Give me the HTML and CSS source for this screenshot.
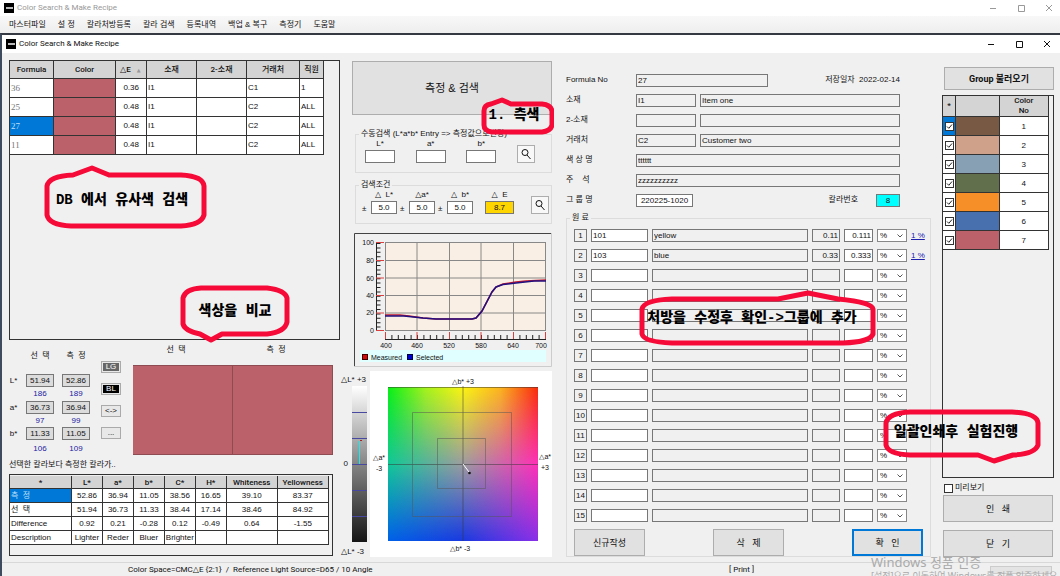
FILE: index.html
```html
<!DOCTYPE html>
<html lang="ko">
<head>
<meta charset="utf-8">
<title>Color Search &amp; Make Recipe</title>
<link rel="stylesheet" href="styles.css">
</head>
<body>
<header class="titlebar titlebar-outer">
  <span class="app-icon"></span><span class="title">Color Search &amp; Make Recipe</span>
  <svg class="win-controls" viewBox="0 0 66 10"><path d="M1 5.500h6M29.500 2.500h6v6h-6zM57 2l6 6M63 2l-6 6"/></svg>
</header>
<nav class="menubar">
  <a href="#">마스터파일</a><a href="#">설 정</a><a href="#">칼라처방등록</a><a href="#">칼라 검색</a><a href="#">등록내역</a><a href="#">백업 &amp; 복구</a><a href="#">측정기</a><a href="#">도움말</a>
</nav>
<div class="window">
  <header class="titlebar">
    <span class="app-icon"></span><span class="title">Color Search &amp; Make Recipe</span>
    <svg class="win-controls" viewBox="0 0 66 10"><path d="M1 5.500h6M29.500 2.500h6v6h-6zM57 2l6 6M63 2l-6 6"/></svg>
  </header>
  <main class="workspace">
    <section class="results">
      <div class="grid-panel search-panel">
        <table class="grid search-grid">
          <colgroup><col class="w-formula"><col class="w-color"><col class="w-de"><col class="w-mat"><col class="w-mat"><col class="w-cust"><col class="w-staff"></colgroup>
          <thead><tr><th>Formula</th><th>Color</th><th class="left">△E <span class="sort">▲</span></th><th>소재</th><th>2-소재</th><th>거래처</th><th>직원</th></tr></thead>
          <tbody>
            <tr><td class="id">36</td><td class="rose"></td><td class="num">0.36</td><td>I1</td><td></td><td>C1</td><td>1</td></tr>
            <tr><td class="id">25</td><td class="rose"></td><td class="num">0.48</td><td>I1</td><td></td><td>C2</td><td>ALL</td></tr>
            <tr><td class="id selected">27</td><td class="rose"></td><td class="num">0.48</td><td>I1</td><td></td><td>C2</td><td>ALL</td></tr>
            <tr><td class="id">11</td><td class="rose"></td><td class="num">0.48</td><td>I1</td><td></td><td>C2</td><td>ALL</td></tr>
          </tbody>
        </table>
      </div>
      <div class="compare">
        <div class="lab-values">
          <span></span><span class="lab-head">선&nbsp; 택</span><span class="lab-head">측&nbsp; 정</span>
          <span>L*</span><output class="value">51.94</output><output class="value">52.86</output>
          <span></span><span class="rgb">186</span><span class="rgb">189</span>
          <span>a*</span><output class="value">36.73</output><output class="value">36.94</output>
          <span></span><span class="rgb">97</span><span class="rgb">99</span>
          <span>b*</span><output class="value">11.33</output><output class="value">11.05</output>
          <span></span><span class="rgb">106</span><span class="rgb">109</span>
        </div>
        <div class="mini-buttons">
          <button class="mini"><span class="lg">LG</span></button><button class="mini"><span class="bl">BL</span></button><button class="mini">&lt;-&gt;</button><button class="mini">...</button>
        </div>
        <div class="swatches">
          <span>선&nbsp; 택</span><span>측&nbsp; 정</span>
          <div class="swatch"></div><div class="swatch"></div>
        </div>
      </div>
      <p class="verdict">선택한 칼라보다 측정한 칼라가..</p>
      <div class="grid-panel diff-panel">
        <table class="grid diff-grid">
          <colgroup><col class="w-name"><col><col><col><col><col><col class="w-wide"><col class="w-wide"></colgroup>
          <thead><tr><th>*</th><th>L*</th><th>a*</th><th>b*</th><th>C*</th><th>H*</th><th>Whiteness</th><th>Yellowness</th></tr></thead>
          <tbody>
            <tr><th class="selected">측&nbsp; 정</th><td>52.86</td><td>36.94</td><td>11.05</td><td>38.56</td><td>16.65</td><td>39.10</td><td>83.37</td></tr>
            <tr><th>선&nbsp; 택</th><td>51.94</td><td>36.73</td><td>11.33</td><td>38.44</td><td>17.14</td><td>38.46</td><td>84.92</td></tr>
            <tr><th>Difference</th><td>0.92</td><td>0.21</td><td>-0.28</td><td>0.12</td><td>-0.49</td><td>0.64</td><td>-1.55</td></tr>
            <tr><th>Description</th><td>Lighter</td><td>Reder</td><td>Bluer</td><td>Brighter</td><td></td><td></td><td></td></tr>
          </tbody>
        </table>
      </div>
    </section>

    <section class="measure">
      <div class="measure-top">
        <button class="btn btn-measure">측정 &amp; 검색</button>
        <fieldset class="group manual">
          <legend>수동검색 (L*a*b* Entry =&gt; 측정값으로변경)</legend>
          <label class="stack">L*<input class="field white"></label>
          <label class="stack">a*<input class="field white"></label>
          <label class="stack">b*<input class="field white"></label>
          <button class="btn search-btn" aria-label="수동검색"><svg viewBox="0 0 12 12"><circle cx="5" cy="4.500" r="3"/><path d="M7 7l3.500 4"/></svg></button>
        </fieldset>
        <fieldset class="group cond">
          <legend>검색조건</legend>
          <span class="pm">±</span><label class="stack">△&nbsp; L*<input class="field white" value="5.0"></label>
          <span class="pm">±</span><label class="stack">△a*<input class="field white" value="5.0"></label>
          <span class="pm">±</span><label class="stack">△&nbsp; b*<input class="field white" value="5.0"></label>
          <label class="stack stack-e">△&nbsp; E<input class="field gold" value="8.7"></label>
          <button class="btn search-btn" aria-label="조건검색"><svg viewBox="0 0 12 12"><circle cx="5" cy="4.500" r="3"/><path d="M7 7l3.500 4"/></svg></button>
        </fieldset>
        <svg class="spectrum" viewBox="0 0 198 134">
          <path class="bevel-light" d="M197.500 0v133.500H0"/><path class="bevel-dark" d="M.5 133V.5H197"/>
          <rect class="plot" x="31" y="9" width="161" height="88"/>
          <path class="gridline" d="M31 9.500H192M31 27.500H192M31 45H192M31 62.500H192M31 80H192M31 97.500H192M31.500 9v88M63 9v88M95.500 9v88M127 9v88M159.500 9v88M191.500 9v88"/>
          <path class="ticks-y" d="M24.500 10v88"/>
          <path class="axis" d="M22.500 10v88M31 106.500H192"/>
          <path class="ticks-x" d="M31 104h161"/>
          <path class="major" d="M22 9.500h8M22 27.500h8M22 45h8M22 62.500h8M22 80h8M22 97.500h8M31.500 99v7M63 99v7M95.500 99v7M127 99v7M159.500 99v7M191.500 99v7"/>
          <path class="curve measured" d="M31 82H46L55 83L69 85L82 86H118L122 85L128 78L138 59L142 54L149 51L162 49L172 48L192 47"/>
          <path class="curve chosen" d="M31 83H50L69 85L82 86H118L122 85L128 78L138 59L142 54L149 51.500L162 50L180 48L192 48"/>
          <g class="axis-text" text-anchor="end"><text x="20" y="12">100</text><text x="20" y="30">80</text><text x="20" y="48">60</text><text x="20" y="65">40</text><text x="20" y="82">20</text><text x="20" y="100">0</text></g>
          <g class="axis-text" text-anchor="middle"><text x="32" y="115">400</text><text x="63" y="115">460</text><text x="95" y="115">520</text><text x="127" y="115">580</text><text x="159" y="115">640</text><text x="187" y="115">700</text></g>
          <rect class="legend-bg" x="6" y="117" width="186" height="12"/>
          <rect class="key-red" x="8.500" y="121.500" width="5" height="5"/><rect class="key-blue" x="53.500" y="121.500" width="5" height="5"/>
          <text class="axis-text" x="17" y="127">Measured</text><text class="axis-text" x="62" y="127">Selected</text>
        </svg>
      </div>
      <div class="charts">
        <div class="lightness">
          <span>△L* +3</span>
          <div class="light-row"><span>0</span>
            <svg class="light-bar" viewBox="0 0 15 156"><defs><linearGradient id="lg" x1="0" y1="0" x2="0" y2="1"><stop offset="0" stop-color="#fff"/><stop offset=".5" stop-color="#858585"/><stop offset="1" stop-color="#151515"/></linearGradient></defs><rect width="15" height="156" fill="url(#lg)"/><path d="M0 26.500h15M0 52.500h15M0 78.500h15M0 104.500h15M0 130.500h15" stroke="#4848a0"/><path d="M7.500 55v23" stroke="#1ee"/><path d="M8 54.500h2" stroke="#a22"/></svg>
          </div>
          <span>△L* -3</span>
        </div>
        <svg class="gamut" viewBox="0 0 182 186">
          <defs>
            <linearGradient id="g-top"><stop offset="0" stop-color="#08f014"/><stop offset=".25" stop-color="#a4f21a"/><stop offset=".5" stop-color="#fcf410"/><stop offset=".75" stop-color="#fcb41c"/><stop offset="1" stop-color="#f82a08"/></linearGradient>
            <linearGradient id="g-mid"><stop offset="0" stop-color="#10c898"/><stop offset=".5" stop-color="#9c9ca0"/><stop offset="1" stop-color="#ff30b8"/></linearGradient>
            <linearGradient id="g-bot"><stop offset="0" stop-color="#0060e8"/><stop offset=".5" stop-color="#1838e0"/><stop offset="1" stop-color="#8830e8"/></linearGradient>
            <linearGradient id="f-top" x1="0" y1="0" x2="0" y2="1"><stop offset="0" stop-color="#fff"/><stop offset=".5" stop-color="#fff" stop-opacity="0"/></linearGradient>
            <linearGradient id="f-bot" x1="0" y1="1" x2="0" y2="0"><stop offset="0" stop-color="#fff"/><stop offset=".5" stop-color="#fff" stop-opacity="0"/></linearGradient>
            <mask id="m-top"><rect x="18" y="16" width="150" height="154" fill="url(#f-top)"/></mask>
            <mask id="m-bot"><rect x="18" y="16" width="150" height="154" fill="url(#f-bot)"/></mask>
          </defs>
          <rect width="182" height="186" fill="#fff"/>
          <rect x="18" y="16" width="150" height="154" fill="url(#g-mid)"/>
          <rect x="18" y="16" width="150" height="154" fill="url(#g-top)" mask="url(#m-top)"/>
          <rect x="18" y="16" width="150" height="154" fill="url(#g-bot)" mask="url(#m-bot)"/>
          <path class="gamut-line" d="M18 16.500h150M18 93.500h150M93 15v155"/><path class="gamut-box" d="M42.500 41.500h99v104h-99zM67.500 67.500h48v50h-48z"/>
          <path d="M93 93l6 8" stroke="#fff"/><circle cx="99.500" cy="102" r="1.300"/>
          <text x="82" y="13">△b* +3</text><text x="80" y="180">△b* -3</text><text x="3" y="89">△a*</text><text x="6" y="100">-3</text><text x="169" y="88">△a*</text><text x="171" y="99">+3</text>
        </svg>
      </div>
    </section>

    <section class="recipe">
      <div class="meta">
        <div class="meta-row"><label for="f-no">Formula No</label><input id="f-no" class="field w-no" value="27"><span class="meta-end">저장일자 &nbsp;2022-02-14</span></div>
        <div class="meta-row"><label for="f-mat">소재</label><input id="f-mat" class="field w-code" value="I1"><input class="field grow" aria-label="소재 이름" value="Item one"></div>
        <div class="meta-row"><label for="f-mat2">2-소재</label><input id="f-mat2" class="field w-code"><input class="field grow" aria-label="2-소재 이름"></div>
        <div class="meta-row"><label for="f-cust">거래처</label><input id="f-cust" class="field w-code" value="C2"><input class="field grow" aria-label="거래처 이름" value="Customer two"></div>
        <div class="meta-row"><label for="f-color">색 상 명</label><input id="f-color" class="field grow" value="tttttt"></div>
        <div class="meta-row"><label for="f-note">주&nbsp;&nbsp;&nbsp; 석</label><input id="f-note" class="field grow" value="zzzzzzzzzz"></div>
        <div class="meta-row"><label for="f-group">그 룹 명</label><input id="f-group" class="field white center w-group" value="220225-1020"><label class="meta-end" for="f-num">칼라번호</label><input id="f-num" class="field cyan center w-num" value="8"></div>
      </div>
      <fieldset class="group materials">
        <legend>원 료</legend>
        <div class="material-rows" id="materials"></div>
        <div class="actions"><button class="btn">신규작성</button><button class="btn">삭&nbsp;&nbsp; 제</button><button class="btn primary">확&nbsp;&nbsp; 인</button></div>
      </fieldset>
      <div class="callout callout-recipe"><svg viewBox="0 0 240 60"><path d="M34 10H140L170 4L200 10Q234 13 235 20V45Q232 53 205 54H34Q6 53 4 45V20Q6 11 34 10Z"/></svg><span>처방을 수정후 확인-&gt;그룹에 추가</span></div>
    </section>

    <aside class="side">
      <button class="btn load">Group 불러오기</button>
      <div class="grid-panel group-panel">
        <table class="grid group-grid">
          <colgroup><col class="w-check"><col class="w-sw"><col></colgroup>
          <thead><tr><th>*</th><th></th><th>Color<br>No</th></tr></thead>
          <tbody>
            <tr><td class="selected"><input type="checkbox" checked aria-label="1"></td><td class="c1"></td><td>1</td></tr>
            <tr><td><input type="checkbox" checked aria-label="2"></td><td class="c2"></td><td>2</td></tr>
            <tr><td><input type="checkbox" checked aria-label="3"></td><td class="c3"></td><td>3</td></tr>
            <tr><td><input type="checkbox" checked aria-label="4"></td><td class="c4"></td><td>4</td></tr>
            <tr><td><input type="checkbox" checked aria-label="5"></td><td class="c5"></td><td>5</td></tr>
            <tr><td><input type="checkbox" checked aria-label="6"></td><td class="c6"></td><td>6</td></tr>
            <tr><td><input type="checkbox" checked aria-label="7"></td><td class="rose"></td><td>7</td></tr>
          </tbody>
        </table>
      </div>
      <label class="preview"><input type="checkbox">미리보기</label>
      <button class="btn side-btn">인&nbsp;&nbsp; 쇄</button>
      <button class="btn side-btn last">닫&nbsp;&nbsp; 기</button>
      <div class="callout callout-print"><svg viewBox="0 0 160 62"><path d="M28 7H130Q155 8 156 18V40Q153 49 131 50L112 56L96 50H28Q6 49 4 40V18Q6 8 28 7Z"/></svg><span>일괄인쇄후 실험진행</span></div>
    </aside>

    <div class="callout callout-db"><svg viewBox="0 0 166 72"><path d="M30 17L49 10L66 17H138Q160 18 161 28V57Q158 67 138 68H28Q6 67 4 57V28Q6 18 30 17Z"/></svg><span>DB 에서 유사색 검색</span></div>
    <div class="callout callout-color"><svg viewBox="0 0 112 62"><path d="M22 6H88Q106 8 108 16V40Q106 50 88 52H43L32 58L21 52Q6 49 4 42V16Q6 7 22 6Z"/></svg><span>색상을 비교</span></div>
    <div class="callout callout-measure"><svg viewBox="0 0 76 40"><path d="M13 9L24 5L33 9H64Q73 10 74 16V30Q73 36 64 37H14Q6 36 6 30V16Q6 10 13 9Z"/></svg><span>1. 측색</span></div>
  </main>
  <footer class="status"><span class="status-main">Color Space=CMC△E {2:1}&nbsp; /&nbsp; Reference Light Source=D65 / 10 Angle</span><span class="status-print">[ Print ]</span><span class="progress"></span></footer>
</div>
<div class="watermark"><strong>Windows 정품 인증</strong><span>[설정]으로 이동하여 Windows를 정품 인증하세요.</span></div>
<script src="rows.js"></script>
</body>
</html>
```
FILE: styles.css
```css
* { box-sizing: border-box; }
:root {
  --ui: "Liberation Sans", "DejaVu Sans", "Noto Sans CJK KR", sans-serif;
  --title: Roboto, "DejaVu Sans", "Noto Sans CJK KR", sans-serif;
  --face: #e1e1e1;
}
html, body { margin: 0; }
body { min-height: 100vh; display: flex; flex-direction: column; position: relative; overflow: hidden; background: #f0f0f0; color: #111; font: 8px/10px var(--ui); }
button, input, select { font: inherit; color: inherit; margin: 0; padding: 0; border-radius: 0; }
a { color: inherit; text-decoration: none; }

.titlebar { display: flex; align-items: center; gap: 3px; height: 18px; padding: 0 7px 0 4px; background: #fff; font: 8px/12px var(--title); }
.titlebar-outer { height: 16px; padding-left: 4px; padding-right: 5px; color: #999; }
.app-icon { width: 10px; height: 10px; background: linear-gradient(#bbb, #bbb) center / 7px 2px no-repeat #000; }
.win-controls { width: 66px; height: 10px; margin-left: auto; fill: none; stroke: currentColor; }
.menubar { display: flex; align-items: center; gap: 12px; height: 17px; padding: 0 9px; background: linear-gradient(#f8f8f8, #eee); white-space: nowrap; }
.window { flex: 1; display: flex; flex-direction: column; border-top: 2px solid #343942; border-left: 2px solid #3e4b5f; }

.workspace { position: relative; flex: 1; display: grid; grid-template-columns: minmax(0, 331fr) 222px minmax(0, 380fr) 112px; padding: 7px 6px 5px 7px; }
.results, .recipe, .side { display: flex; flex-direction: column; position: relative; }

.grid-panel { border: 1px solid #333; background: #f0f0f0; }
.grid { border-collapse: separate; border-spacing: 0; table-layout: fixed; background: #fff; }
.grid th, .grid td { padding: 0 1px; border-right: 1px solid #333; border-bottom: 1px solid #333; overflow: hidden; white-space: nowrap; font-weight: normal; }
.grid thead th { background: #d4d4d4; font-family: var(--title); font-weight: 500; text-align: center; }
.grid thead .left { text-align: left; padding-left: 4px; }
.grid .selected { background: #0078d7; color: #bfe0fa; }
.rose, .swatch { background: #ba6169; }
.search-panel { height: 280px; }
.search-grid { width: 95.500%; }
.search-grid th { height: 18px; }
.search-grid td { height: 19px; }
.grid .id { color: #777; font: 9px/10px "Liberation Serif", serif; }
.grid .id.selected { color: #bfe0fa; }
.grid .num { text-align: right; padding-right: 7px; }
.sort { color: #999; font-size: 5px; padding-left: 4px; }
.w-formula { width: 44px; } .w-color { width: 62px; } .w-de { width: 31px; } .w-mat { width: 50px; } .w-cust { width: 53px; }

.compare { display: flex; height: 118px; }
.lab-values { display: grid; grid-template-columns: 9px 28px 28px; grid-template-rows: 24px 13px 14px 13px 13px 13px 18px; column-gap: 8px; align-items: center; width: 84px; padding-top: 10px; text-align: center; }
.lab-head { align-self: start; line-height: 12px; }
.value { display: block; height: 13px; border: 1px solid #777; background: #dcdcdc; line-height: 11px; }
.rgb { color: #2020a0; }
.mini-buttons { display: flex; flex-direction: column; gap: 10px; width: 20px; margin: 21px 12px 0 8px; }
.mini { height: 12px; border: 1px solid #aaa; background: #e8e8e8; line-height: 8px; text-align: center; }
.mini span { display: block; margin: 0 1px; color: #fff; }
.lg { background: #666; } .bl { background: #000; }
.swatches { flex: 1; display: grid; grid-template-columns: 1fr 1fr; grid-template-rows: 25px 90px; margin-right: 7px; text-align: center; }
.swatches span { padding-top: 5px; padding-right: 14px; }
.swatch { border: 1px solid #8e4b51; border-left: 0; }
.verdict { margin: 0; height: 16px; line-height: 14px; }
.diff-panel { height: 82px; margin-right: 7px; padding-top: 1px; }
.diff-grid { width: 99%; }
.diff-grid thead th { height: 13px; line-height: 11px; }
.diff-grid tbody th { height: 14px; text-align: left; }
.diff-grid td { line-height: 11px; text-align: center; }
.w-name { width: 62px; } .w-wide { width: 51px; }

.measure { display: flex; flex-direction: column; padding-right: 10px; }
.measure-top { display: flex; flex-direction: column; padding: 1px 0 0 12px; }
.btn { border: 1px solid #adadad; background: var(--face); }
.btn-measure { height: 54px; font-size: 11px; }
.group { margin: 0; border: 1px solid #dcdcdc; padding: 0; min-width: 0; }
.group legend { padding: 0 2px; margin-left: -6px; line-height: 10px; white-space: nowrap; }
.manual, .cond { display: flex; align-items: flex-end; margin-left: 3px; }
.manual { height: 44px; margin-top: 14px; padding: 0 16px 4px 9px; justify-content: space-between; }
.cond { height: 44px; margin-top: 7px; padding: 0 2px 3px 6px; gap: 3px; }
.cond legend { margin-left: -3px; }
.stack { display: flex; flex-direction: column; gap: 1px; width: 30px; text-align: center; white-space: nowrap; }
.cond .stack { width: 26px; }
.cond .stack-e { width: 29px; margin-left: 9px; }
.pm { width: 6px; }
.search-btn { width: 18px; height: 18px; background: #f8f8f8; }
.cond .search-btn { margin-left: auto; }
.search-btn svg { display: block; width: 12px; height: 12px; margin: 2px; fill: none; stroke: #111; }
.field { height: 13px; min-width: 0; border: 1px solid #777; background: #f0f0f0; padding: 0 1px; line-height: 11px; }
.stack .field { width: 100%; text-align: center; }
.field.white { background: #fff; } .field.gold { background: #ffd500; } .field.cyan { background: #0ff; }
.center { text-align: center; }
.spectrum { display: block; width: 198px; height: 134px; margin: 9px 0 0 2px; fill: none; }
.bevel-dark { stroke: #444; } .bevel-light { stroke: #ccc; }
.plot { fill: #faefe4; } .gridline { stroke: #888; } .axis { stroke: #222; }
.ticks-y { stroke: #222; stroke-width: 4; stroke-dasharray: 1 3.400; }
.ticks-x { stroke: #222; stroke-width: 4; stroke-dasharray: 1 5.400; }
.major { stroke: #d84040; }
.curve { stroke-width: 1.500; } .measured { stroke: #c01830; } .chosen { stroke: #201080; }
.axis-text, .axis-text text { font: 7px var(--ui); fill: #111; }
.legend-bg { fill: #e0ffff; } .key-red { fill: #c11; stroke: #400; } .key-blue { fill: #00c; stroke: #004; }
.charts { display: flex; margin-top: 4px; }
.lightness { width: 30px; padding-top: 4px; white-space: nowrap; }
.lightness > span { display: block; margin-left: 1px; }
.light-row { display: flex; align-items: center; justify-content: flex-end; gap: 4px; padding: 1px 3px 5px 0; }
.light-bar { width: 15px; height: 156px; }
.gamut { flex: none; width: 182px; height: 186px; fill: #111; }
.gamut text { font: 7px var(--ui); }
.gamut-line { stroke: #333; stroke-opacity: .5; fill: none; } .gamut-box { stroke: #555; stroke-opacity: .5; fill: none; }

.recipe { padding-right: 11px; }
.meta { display: flex; flex-direction: column; gap: 6px; padding: 13px 31px 0 4px; }
.meta-row { display: flex; align-items: center; gap: 4px; height: 14px; }
.meta-row > label:first-child { width: 66px; white-space: nowrap; }
.w-no { width: 132px; } .w-code { width: 60px; } .w-group { width: 57px; } .w-num { width: 24px; } .grow { flex: 1; }
.meta-end { margin-left: auto; } .meta-row label.meta-end { margin-right: 14px; }
.materials { margin: 6px 0 0 4px; padding: 6px 4px 0 7px; }
.materials legend { margin-left: -4px; }
.material-rows { display: flex; flex-direction: column; gap: 7px; }
.material { display: grid; grid-template-columns: 13px 57px minmax(0, 1fr) 28px 29px 30px 15px; column-gap: 4px; height: 13px; }
.material .no { border: 1px solid #777; text-align: center; line-height: 11px; }
.material .field { width: 100%; }
.right { text-align: right; }
.unit { appearance: none; height: 13px; border: 1px solid #888; padding-left: 2px; line-height: 10px; background: url("data:image/svg+xml,%3Csvg xmlns='http://www.w3.org/2000/svg' width='6' height='4'%3E%3Cpath d='M.5.5L3 3 5.500.5' fill='none' stroke='%23555'/%3E%3C/svg%3E") right 3px center no-repeat #fff; }
.rate { color: #2020b0; line-height: 13px; text-decoration: underline; white-space: nowrap; }
.actions { display: flex; justify-content: space-between; margin: 7px 3px 0 0; }
.actions .btn { width: 71px; height: 27px; font-size: 9px; }
.actions .primary { border: 2px solid #0078d7; }

.load { height: 23px; margin: 7px 0 5px 2px; font: bold 9px/12px var(--title); }
.group-panel { height: 383px; }
.group-grid { width: 96%; }
.group-grid thead th { height: 21px; line-height: 10px; }
.group-grid td { height: 19px; padding: 0; text-align: center; line-height: 11px; }
.w-check { width: 13px; } .w-sw { width: 44px; }
input[type="checkbox"] { appearance: none; display: block; flex: none; width: 9px; height: 9px; border: 1px solid #333; background: #fff; }
.group-grid input { margin: 0 auto; }
input[type="checkbox"]:checked { background: url("data:image/svg+xml,%3Csvg xmlns='http://www.w3.org/2000/svg' width='7' height='7'%3E%3Cpath d='M1 3.500L2.800 5.300 6 1.500' fill='none' stroke='%23222'/%3E%3C/svg%3E") center no-repeat #fff; }
.c1 { background: #785943; } .c2 { background: #cfa18a; } .c3 { background: #88a0b3; } .c4 { background: #626f4d; } .c5 { background: #f68f28; } .c6 { background: #486fae; }
.preview { display: flex; align-items: center; gap: 2px; height: 17px; padding: 3px 0 0 2px; }
.side-btn { height: 27px; margin: 0 1px; font-size: 9px; }
.last { margin-top: 8px; }

.status { display: flex; align-items: center; height: 14px; border-top: 1px solid #d8d8d8; padding-left: 126px; font: 8px/12px var(--title); white-space: nowrap; }
.status-print { margin-left: auto; margin-right: 236px; }
.progress { width: 62px; height: 8px; border: 1px solid #ccc; background: #e4e4e4; margin-right: 8px; }
.watermark { position: absolute; left: 871px; top: 553px; display: flex; flex-direction: column; color: #aaa; white-space: nowrap; font-family: "Noto Sans", "Noto Sans CJK KR", sans-serif; pointer-events: none; }
.watermark strong { font-size: 13px; line-height: 18px; font-weight: normal; }
.watermark span { font-size: 9px; line-height: 10px; }

.callout { position: absolute; display: flex; align-items: center; justify-content: center; pointer-events: none; color: #000; font: 900 14px/18px "Liberation Mono", "Noto Sans CJK KR", monospace; white-space: nowrap; }
.callout svg { position: absolute; inset: 0; width: 100%; height: 100%; fill: none; stroke: #f60a38; stroke-width: 5; stroke-linejoin: round; }
.callout-db { left: 41px; top: 105px; width: 166px; height: 72px; padding: 12px 8px 0 0; }
.callout-color { left: 177px; top: 229px; width: 112px; height: 62px; padding-bottom: 4px; }
.callout-measure { left: 476px; top: 42px; width: 76px; height: 40px; padding-right: 4px; }
.callout-recipe { left: 76px; top: 229px; width: 240px; height: 60px; padding: 0 12px 2px 0; }
.callout-print { right: 12px; top: 345px; width: 160px; height: 62px; padding: 0 12px 8px 0; }
```
FILE: rows.js
```js
const filled = [
  { code: "101", name: "yellow", base: "0.11", amount: "0.111", rate: "1 %" },
  { code: "103", name: "blue", base: "0.33", amount: "0.333", rate: "1 %" },
];
const list = document.getElementById("materials");
for (let n = 1; n <= 15; n++) {
  const m = filled[n - 1] || { code: "", name: "", base: "", amount: "", rate: "" };
  const row = document.createElement("div");
  row.className = "material";
  row.innerHTML = `<span class="no">${n}</span>
    <input class="field white" aria-label="${n} 코드" value="${m.code}">
    <input class="field" aria-label="${n} 이름" value="${m.name}">
    <input class="field right" aria-label="${n} 기준" value="${m.base}">
    <input class="field white right" aria-label="${n} 양" value="${m.amount}">
    <select class="unit" aria-label="${n} 단위"><option>%</option></select>
    ${m.rate ? `<a class="rate" href="#">${m.rate}</a>` : ""}`;
  list.append(row);
}
```
